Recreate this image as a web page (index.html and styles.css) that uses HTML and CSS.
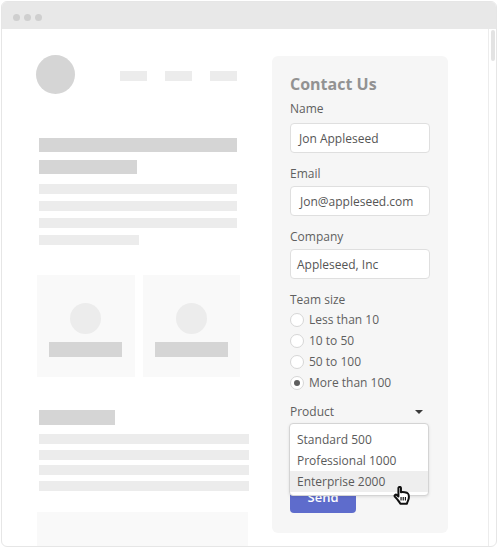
FILE: index.html
```html
<!DOCTYPE html>
<html lang="en">
<head>
<meta charset="utf-8">
<title>Contact form</title>
<link rel="stylesheet" href="styles.css">
</head>
<body>
<div class="window">
  <div class="titlebar"><i class="dot"></i><i class="dot"></i><i class="dot"></i></div>
  <div class="main">
    <div class="page">
      <div class="header">
        <div class="logo"></div>
        <div class="nav"><i class="nav-item"></i><i class="nav-item"></i><i class="nav-item"></i></div>
      </div>
      <div class="bar dark hero-1"></div>
      <div class="bar dark hero-2"></div>
      <div class="bar light line first"></div>
      <div class="bar light line"></div>
      <div class="bar light line"></div>
      <div class="bar light line short"></div>
      <div class="cards">
        <div class="card"><div class="avatar"></div><div class="bar dark card-bar"></div></div>
        <div class="card card-narrow"><div class="avatar"></div><div class="bar dark card-bar"></div></div>
      </div>
      <div class="bar dark sub"></div>
      <div class="bar light wide first"></div>
      <div class="bar light wide"></div>
      <div class="bar light wide tight"></div>
      <div class="bar light wide"></div>
      <div class="block"></div>
    </div>
    <form class="panel">
      <h2 class="panel-title">Contact Us</h2>
      <div class="label label-name">Name</div>
      <div class="input">Jon Appleseed</div>
      <div class="label">Email</div>
      <div class="input input-email">Jon@appleseed.com</div>
      <div class="label">Company</div>
      <div class="input input-company">Appleseed, Inc</div>
      <div class="label label-team">Team size</div>
      <div class="radio"><i class="circle"></i>Less than 10</div>
      <div class="radio"><i class="circle"></i>10 to 50</div>
      <div class="radio"><i class="circle"></i>50 to 100</div>
      <div class="radio"><i class="circle checked"></i>More than 100</div>
      <div class="label product">Product<i class="caret"></i></div>
      <div class="select-wrap">
        <div class="menu">
          <div class="option">Standard 500</div>
          <div class="option">Professional 1000</div>
          <div class="option active">Enterprise 2000</div>
        </div>
        <svg class="cursor" width="19" height="20" viewBox="0 0 20 22" aria-hidden="true">
          <path d="M5.500 2.200c0-1.600 2.800-1.600 2.800 0v4.600c2-.6 6.500.2 7.600 1.300 1.600 1.500 1.400 5.600.2 8-.6 1.300-1 2-1.200 3.400H7.600c-.6-1.600-1.700-2.700-3.300-4.700L1.600 11.600c-1-1.400.9-2.800 2.100-1.700l1.800 1.700z" fill="#fff" stroke="#111" stroke-width="2.200" stroke-linejoin="round"/>
          <path d="M8.400 12v4M10.800 12v4M13.200 12v4" stroke="#111" stroke-width="1.300" fill="none"/>
        </svg>
      </div>
      <button class="send" type="button">Send</button>
    </form>
    <div class="scrollbar"><div class="thumb"></div></div>
  </div>
</div>
</body>
</html>
```
FILE: styles.css
```css
* { box-sizing: border-box; }
html, body { margin: 0; padding: 0; background: #fff; }
body { width: 498px; height: 548px; overflow: hidden; font-family: "Open Sans", sans-serif; }
i { display: block; }

.window {
  width: 496px; height: 546px; margin: 1px;
  border: 1px solid #e6e6e6; border-radius: 6px;
  display: flex; flex-direction: column; overflow: hidden; background: #fff;
}
.titlebar {
  height: 27px; flex: none; background: #e8e8e8;
  display: flex; align-items: center; gap: 4px; padding: 3px 0 0 11px;
}
.dot { width: 7px; height: 7px; border-radius: 50%; background: #cfcfcf; }
.main { flex: 1; min-height: 0; display: flex; }

/* wireframe page */
.page { width: 270px; flex: none; padding: 26px 0 0 35px; overflow: hidden; }
.header { display: flex; margin-left: -1px; }
.logo { width: 39px; height: 39px; border-radius: 50%; background: #d5d5d5; }
.nav { display: flex; margin: 16px 0 0 45px; }
.nav-item { width: 27px; height: 10px; background: #ececec; margin-right: 18px; }
.bar { margin-left: 1.500px; }
.dark { background: #d5d5d5; }
.light { background: #ececec; }
.hero-1 { width: 198.500px; height: 14.500px; margin-top: 43.500px; }
.hero-2 { width: 98px; height: 14.500px; margin-top: 7.500px; }
.line { width: 198.500px; height: 10px; margin-top: 7px; }
.line.first { margin-top: 9.500px; }
.line.short { width: 100.500px; }
.cards { display: flex; gap: 8px; margin-top: 30px; }
.card {
  width: 98px; height: 102px; background: #f9f9f9;
  display: flex; flex-direction: column; align-items: center; padding: 28px 1px 0 0;
}
.card-narrow { width: 97px; }
.avatar { width: 31px; height: 31px; border-radius: 50%; background: #ececec; }
.card-bar { width: 73px; height: 14.500px; margin: 8.500px 0 0; }
.sub { width: 76.500px; height: 15px; margin-top: 33px; }
.wide { width: 210px; height: 10px; margin-top: 6px; }
.wide.first { margin-top: 9px; }
.wide.tight { margin-top: 5px; }
.block { width: 211px; height: 40px; margin-top: 21px; background: #f9f9f9; }

/* contact form */
.panel {
  width: 176px; height: 477px; flex: none; margin: 27px 0 0 0;
  padding: 16px 18px 0; background: #f6f6f6; border-radius: 6px;
}
.panel-title { margin: 0; font-size: 16px; line-height: 24px; font-weight: 700; color: #929292; }
.label { font-size: 12px; line-height: 20px; color: #5f5f5f; margin: 11px 0 2px; }
.label-name { margin: 3px 0 4px; }
.label-team { margin-bottom: -1px; }
.input {
  width: 140px; height: 30px; background: #fff;
  border: 1px solid #dfdfdf; border-radius: 4px;
  padding-left: 8px; font-size: 12px; line-height: 30px; color: #555;
}
.input-email { padding-left: 9px; }
.input-company { padding-left: 6px; }
.radio {
  display: flex; align-items: center; gap: 5px; height: 21px;
  font-size: 12px; color: #5f5f5f;
}
.circle { width: 14px; height: 14px; border-radius: 50%; border: 1px solid #d6d6d6; background: #fff; position: relative; }
.checked::after {
  content: ""; position: absolute; left: 3px; top: 3px;
  width: 6px; height: 6px; border-radius: 50%; background: #5f5f5f;
}
.label.product { margin: 9px 0 -1px; display: flex; justify-content: space-between; align-items: center; padding-right: 7px; }
.caret { width: 0; height: 0; border: 4px solid transparent; border-top-color: #3a3a3a; border-bottom: 0; }
.select-wrap { position: relative; height: 0; }
.menu {
  position: absolute; left: -1px; top: 2px; width: 140px; height: 73px;
  background: #fff; border: 1px solid #d4d4d4; border-radius: 4px;
  box-shadow: 0 1px 3px rgba(0,0,0,.1); padding-top: 5px; overflow: hidden; z-index: 2;
}
.option { height: 21px; padding-left: 7px; font-size: 12px; line-height: 21px; color: #5a5a5a; }
.cursor { position: absolute; left: 103px; top: 65px; z-index: 3; }
.send {
  display: block; width: 66px; height: 32px; margin-top: 60px; padding: 0;
  border: 0; border-radius: 4px; background: #5e6ccc; color: #fff;
  font: 600 13px/14px "Open Sans", sans-serif;
}
.option.active { background: #eeeeee; }

.scrollbar { margin-left: 40px; width: 9px; flex: none; border-left: 1px solid #ececec; padding: 1px 2px 0 2px; }
.thumb { width: 4px; height: 31px; background: #e3e3e3; border-radius: 2px; }
```
